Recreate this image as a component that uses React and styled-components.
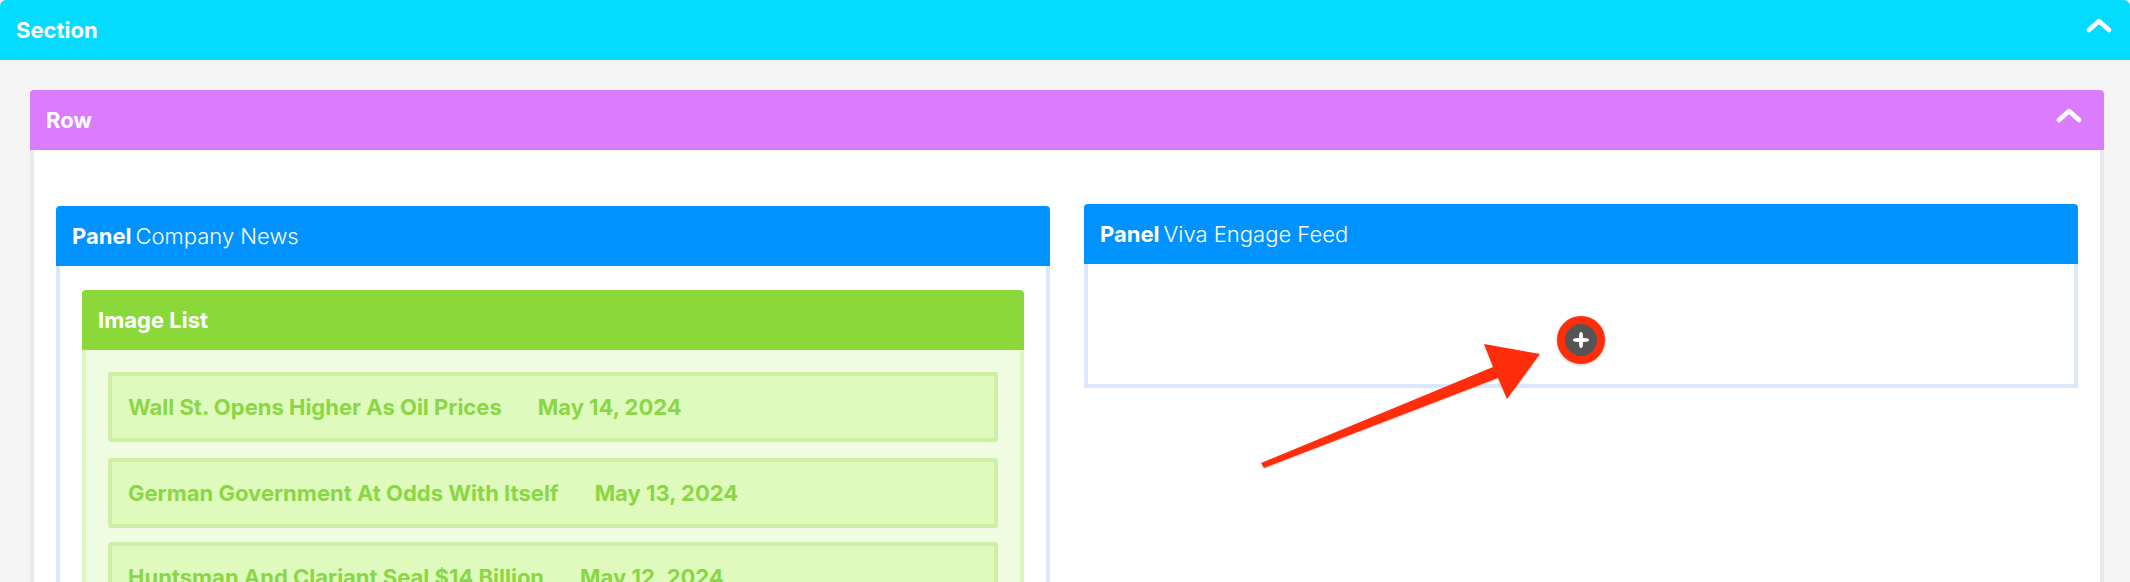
import React from 'react';
import styled, { createGlobalStyle } from 'styled-components';

const Global = createGlobalStyle`
  html, body { margin: 0; padding: 0; background: #f5f5f5; }
  body { font-family: Inter, "Liberation Sans", sans-serif; }
`;

const Page = styled.div`
  position: relative;
  height: 582px;
  overflow: hidden;
  background: #f5f5f5;
`;

const Header = styled.div`
  height: 60px;
  box-sizing: border-box;
  display: flex;
  align-items: center;
  justify-content: space-between;
  padding: 0 ${p => p.$padRight || 16}px 0 16px;
  background: ${p => p.$bg};
  border-radius: ${p => p.$radius || 4}px ${p => p.$radius || 4}px 0 0;
  color: #fff;
  font-size: 22px;
  font-weight: 700;
  line-height: 26px;
`;

const Light = styled.span`
  font-weight: 300;
  margin-left: 4px;
`;

const Chevron = styled.svg`
  width: 26px;
  height: 16px;
  flex: none;
  margin-top: ${p => p.$up}px;
  fill: none;
  stroke: #fff;
  stroke-width: 4.5;
  stroke-linecap: round;
  stroke-linejoin: round;
`;

const SectionBody = styled.div`
  padding: 30px 26px 0 30px;
`;

const RowBox = styled.div``;

const RowBody = styled.div`
  background: #fff;
  border: solid #e9e9e9;
  border-width: 0 4px;
  padding: 54px 22px 0;
  display: grid;
  grid-template-columns: 994px 994px;
  column-gap: 34px;
  align-items: start;
`;

const Panel = styled.div`
  margin-top: ${p => p.$top}px;
`;

const PanelBody = styled.div`
  background: #fff;
  border: solid #d9e8fa;
  border-width: 0 4px 4px;
  padding: ${p => p.$pad};
  display: ${p => (p.$center ? 'flex' : 'block')};
  justify-content: center;
  height: ${p => (p.$center ? '124px' : 'auto')};
  box-sizing: border-box;
`;

const ListBox = styled.div`
  background: #f0fce2;
  border: solid #dcf7bc;
  border-width: 0 4px;
`;

const ListInner = styled.div`
  padding: 22px 22px 0;
  display: flex;
  flex-direction: column;
`;

const Item = styled.div`
  height: 70px;
  box-sizing: border-box;
  margin-bottom: ${p => p.$gap}px;
  display: flex;
  align-items: center;
  gap: 36px;
  padding: 0 16px;
  background: #defbbd;
  border: 4px solid #cdf0a6;
  border-radius: 3px;
  color: #8bd644;
  font-size: 22px;
  font-weight: 700;
  white-space: nowrap;
`;

const AddButton = styled.div`
  width: 32px;
  height: 32px;
  margin-top: 52px;
  border: 8px solid #ff2d0a;
  border-radius: 50%;
  background: #555;
  box-shadow: 0 1px 3px rgba(0, 0, 0, 0.25);
  display: flex;
  align-items: center;
  justify-content: center;
  flex: none;
`;

const PlusIcon = styled.svg`
  width: 18px;
  height: 18px;
  fill: #fff;
`;

const ArrowOverlay = styled.svg`
  position: absolute;
  left: 1250px;
  top: 335px;
  width: 300px;
  height: 140px;
  fill: #ff2d0a;
  filter: drop-shadow(0 1px 1px rgba(0, 0, 0, 0.15));
`;

const ChevronUp = ({ up }) => (
  <Chevron $up={up} viewBox="0 0 26 16">
    <path d="M3 13 L13 4 L23 13" />
  </Chevron>
);

const items = [
  ['Wall St. Opens Higher As Oil Prices', 'May 14, 2024', 16],
  ['German Government At Odds With Itself', 'May 13, 2024', 14],
  ['Huntsman And Clariant Seal $14 Billion', 'May 12, 2024', 14],
];

export default function App() {
  return (
    <Page>
      <Global />
      <Header $bg="#03dbff" $radius={6} $padRight={18}>
        <span>Section</span>
        <ChevronUp up={-10} />
      </Header>
      <SectionBody>
        <RowBox>
          <Header $bg="#db7cff" $padRight={22}>
            <span>Row</span>
            <ChevronUp up={-10} />
          </Header>
          <RowBody>
            <Panel $top={2}>
              <Header $bg="#0093ff">
                <span>Panel<Light>Company News</Light></span>
              </Header>
              <PanelBody $pad="24px 22px 0">
                <Header $bg="#8bd83b">
                  <span>Image List</span>
                </Header>
                <ListBox>
                  <ListInner>
                    {items.map(([title, date, gap]) => (
                      <Item key={title} $gap={gap}>
                        <span>{title}</span>
                        <span>{date}</span>
                      </Item>
                    ))}
                  </ListInner>
                </ListBox>
              </PanelBody>
            </Panel>
            <Panel $top={0}>
              <Header $bg="#0093ff">
                <span>Panel<Light>Viva Engage Feed</Light></span>
              </Header>
              <PanelBody $pad="0" $center>
                <AddButton>
                  <PlusIcon viewBox="0 0 18 18">
                    <path d="M9 1 C10.2 1 10.6 2 10.8 3.5 L11 7 L14.5 7.2 C16 7.4 17 7.8 17 9 C17 10.2 16 10.6 14.5 10.8 L11 11 L10.8 14.5 C10.6 16 10.2 17 9 17 C7.8 17 7.4 16 7.2 14.5 L7 11 L3.5 10.8 C2 10.6 1 10.2 1 9 C1 7.8 2 7.4 3.5 7.2 L7 7 L7.2 3.5 C7.4 2 7.8 1 9 1 Z" />
                  </PlusIcon>
                </AddButton>
              </PanelBody>
            </Panel>
          </RowBody>
        </RowBox>
      </SectionBody>
      <ArrowOverlay viewBox="0 0 300 140">
        <polygon points="11,128 14,133 248,43 257,64 290,19 234,9 243,32" />
      </ArrowOverlay>
    </Page>
  );
}
